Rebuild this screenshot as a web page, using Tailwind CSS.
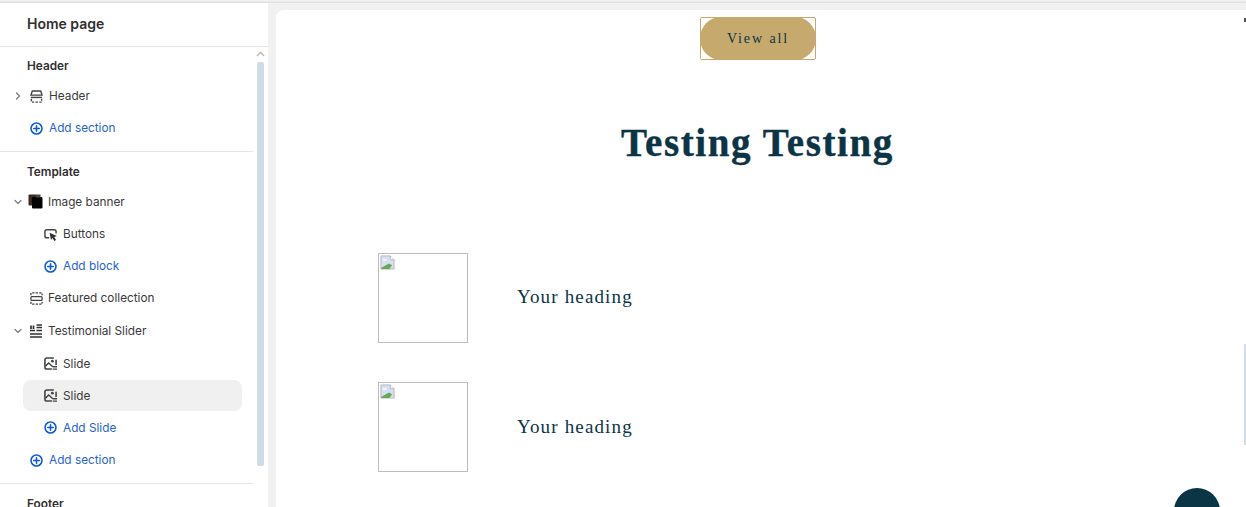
<!DOCTYPE html>
<html lang="en">
  <head>
    <meta charset="UTF-8" />
    <title>Home page</title>
    <script src="https://cdn.jsdelivr.net/npm/@tailwindcss/browser@4"></script>
  </head>
  <body class="h-[507px] w-[1246px] overflow-hidden bg-[#f1f1f1] font-['Inter',sans-serif] text-[#303030]">
    <svg class="hidden">
      <symbol id="plus" viewBox="0 0 14 14"><circle cx="7" cy="7" r="5.9" fill="none" stroke="#0b5bd8" stroke-width="1.7"/><path d="M7 4v6M4 7h6" stroke="#0b5bd8" stroke-width="1.7" stroke-linecap="round"/></symbol>
      <symbol id="slide" viewBox="0 0 14 14"><path d="M10 1H3A2 2 0 0 0 1 3v8a2 2 0 0 0 2 2h5M13 8V3.500" fill="none" stroke="#444" stroke-width="1.700" stroke-linecap="round"/><path d="M1.500 10l3.500-3.500 4.500 4" fill="none" stroke="#444" stroke-width="1.600"/><circle cx="9" cy="4.500" r="1.500" fill="#444"/><path d="M9.500 10.500h4.500M9.500 13h4.500" stroke="#444" stroke-width="1.500"/></symbol>
      <symbol id="down" viewBox="0 0 10 10"><path d="M2 3.500 5 6.500 8 3.500" fill="none" stroke="#777" stroke-width="1.200" stroke-linecap="round"/></symbol>
      <symbol id="broken" viewBox="0 0 16 16"><path d="M1 1h10l4 4v10H1z" fill="#d5e0f7" stroke="#b5b5b5"/><path d="M11 1v4h4" fill="#fff" stroke="#b5b5b5"/><path d="M1.500 15v-1.500l8-4.500 3.500 2-3 4z" fill="#6aa84f"/><path d="M3 4.500h4v1.500H3z" fill="#fff"/></symbol>
    </svg>

    <div class="h-[3px] bg-linear-to-b from-[#f6f6f6] to-[#dcdcdc]"></div>

    <div class="flex h-[504px] items-start">
      <aside class="relative h-[504px] w-[268px] shrink-0 overflow-hidden bg-white text-[11.8px] text-[#3a3a3a] [&_span]:mt-[2px]">
        <div class="flex h-[44px] items-center border-b border-[#e6e6e6] pb-[2px] pl-[27px] text-[14px] font-semibold text-[#303030]">Home page</div>

        <!-- scrollbar -->
        <svg class="absolute left-[256px] top-[47px] h-[8px] w-[9px]" viewBox="0 0 9 8"><path d="M1 6 4.500 2.500 8 6" fill="none" stroke="#bdbdbd" stroke-width="1.600"/></svg>
        <div class="absolute left-[257px] top-[59px] h-[404px] w-[7px] rounded-[2px] bg-[#cfdbe5]"></div>

        <div class="w-[253px]">
          <section class="h-[105px] border-b border-[#e6e6e6]">
            <h3 class="flex h-[33px] items-end pb-[4px] pl-[27px] text-[11.8px] font-semibold text-[#303030]">Header</h3>
            <div class="flex h-[32px] items-center">
              <svg class="ml-[13px] mr-[7px] h-[10px] w-[10px]" viewBox="0 0 10 10"><path d="M3.500 2 6.500 5 3.500 8" fill="none" stroke="#777" stroke-width="1.200" stroke-linecap="round"/></svg>
              <svg class="mr-[6px] h-[13px] w-[13px]" viewBox="0 0 14 14"><path d="M2.500 1h9l1.500 4.500H1z" fill="none" stroke="#444" stroke-width="1.500"/><path d="M1 8h12" stroke="#444" stroke-width="1.500"/><path d="M1.500 9.500v3.500h11V9.500" fill="none" stroke="#444" stroke-width="1.500" stroke-dasharray="2.500 1.500"/></svg>
              <span>Header</span>
            </div>
            <div class="flex h-[32px] items-center pl-[30px] text-[#2463d4]">
              <svg class="mr-[6px] h-[13px] w-[13px]"><use href="#plus"/></svg><span>Add section</span>
            </div>
          </section>

          <section class="h-[332px] border-b border-[#e6e6e6]">
            <h3 class="flex h-[33px] items-end pb-[3px] pl-[27px] text-[11.8px] font-semibold text-[#303030]">Template</h3>
            <div class="flex h-[33px] items-center">
              <svg class="ml-[13px] mr-[5px] h-[10px] w-[10px]"><use href="#down"/></svg>
              <svg class="mr-[5px] h-[15px] w-[15px]" viewBox="0 0 15 15"><rect x="0.500" y="0.500" width="8" height="11" rx="1" fill="#3a2a22"/><rect x="4" y="3" width="10.500" height="11.500" rx="1" fill="#050505"/><rect x="8" y="0.500" width="4.500" height="3" fill="#5a4030"/></svg>
              <span>Image banner</span>
            </div>
            <div class="flex h-[32px] items-center pl-[44px]">
              <svg class="mr-[6px] h-[13px] w-[13px]" viewBox="0 0 14 14"><path d="M5.500 10.500H3A2 2 0 0 1 1 8.500V4a2 2 0 0 1 2-2h8a2 2 0 0 1 2 2v2" fill="none" stroke="#444" stroke-width="1.600"/><path d="M6 5 14 8.500 11 9.800 13 13 11 14 9.200 10.800 7.500 13z" fill="#303030"/></svg>
              <span>Buttons</span>
            </div>
            <div class="flex h-[32px] items-center pl-[44px] text-[#2463d4]">
              <svg class="mr-[6px] h-[13px] w-[13px]"><use href="#plus"/></svg><span>Add block</span>
            </div>
            <div class="flex h-[32px] items-center pl-[30px]">
              <svg class="mr-[5px] h-[13px] w-[13px]" viewBox="0 0 14 14"><rect x="1" y="5" width="12" height="4" rx="1" fill="none" stroke="#444" stroke-width="1.400"/><path d="M1 3.500V1h12v2.500M1 10.500V13h12v-2.500" fill="none" stroke="#444" stroke-width="1.400" stroke-dasharray="2.500 1.300"/></svg>
              <span>Featured collection</span>
            </div>
            <div class="flex h-[33px] items-center">
              <svg class="ml-[13px] mr-[6px] h-[10px] w-[10px]"><use href="#down"/></svg>
              <svg class="mr-[5px] h-[14px] w-[14px]" viewBox="0 0 14 14"><path d="M1 13h12M1 10h12M7.500 6.500H13M7.500 3.500H13M7.500 1H13" stroke="#333" stroke-width="1.300"/><path d="M2 1.500v3.500M4.500 1.500v3.500M1 6.500h5" stroke="#333" stroke-width="1.700"/></svg>
              <span>Testimonial Slider</span>
            </div>
            <div class="flex h-[33px] items-center pl-[44px]">
              <svg class="mr-[6px] h-[13px] w-[13px]"><use href="#slide"/></svg><span>Slide</span>
            </div>
            <div class="ml-[23px] flex h-[31px] w-[219px] items-center rounded-lg bg-[#f0f0f0] pl-[21px]">
              <svg class="mr-[6px] h-[13px] w-[13px]"><use href="#slide"/></svg><span>Slide</span>
            </div>
            <div class="flex h-[33px] items-center pl-[44px] text-[#2463d4]">
              <svg class="mr-[6px] h-[13px] w-[13px]"><use href="#plus"/></svg><span>Add Slide</span>
            </div>
            <div class="flex h-[32px] items-center pl-[30px] text-[#2463d4]">
              <svg class="mr-[6px] h-[13px] w-[13px]"><use href="#plus"/></svg><span>Add section</span>
            </div>
          </section>

          <h3 class="pl-[27px] pt-[12px] text-[11.8px] font-semibold text-[#303030]">Footer</h3>
        </div>
      </aside>

      <main class="relative ml-[8px] mt-[7px] h-[497px] flex-1 overflow-hidden rounded-tl-lg bg-white font-['Liberation_Serif',serif] text-[#0b3445]">
        <!-- button centred on 758 -->
        <div class="ml-[424px] mt-[7px] flex h-[43px] w-[116px] items-center justify-center rounded-[2px] border border-[#c6a96c] bg-white">
          <a class="-m-px flex h-[43px] w-[116px] shrink-0 items-center justify-center rounded-[21px] bg-[#c6a96c] text-[14px] tracking-[1.900px]">View all</a>
        </div>

        <h1 class="mt-[59px] ml-[345px] w-[273px] whitespace-nowrap text-center text-[39px] leading-[48px] font-bold tracking-[1.600px] [-webkit-text-stroke:0.4px_#0b3445]">Testing Testing</h1>

        <div class="ml-[102px] mt-[86px] flex flex-col gap-[39px]">
          <div class="flex items-center gap-[49px]">
            <div class="h-[90px] w-[90px] border border-[#bdbdbd]"><svg class="m-px h-[15px] w-[15px]"><use href="#broken"/></svg></div>
            <p class="pb-[2px] text-[19px] tracking-[1.150px]">Your heading</p>
          </div>
          <div class="flex items-center gap-[49px]">
            <div class="h-[90px] w-[90px] border border-[#bdbdbd]"><svg class="m-px h-[15px] w-[15px]"><use href="#broken"/></svg></div>
            <p class="text-[19px] tracking-[1.150px]">Your heading</p>
          </div>
        </div>

        <!-- stray preview scrollbar and chat bubble -->
        <div class="absolute left-[968px] top-[334px] h-[101px] w-[2px] bg-[#cfdbe5]"></div>
        <div class="absolute left-[968px] top-[8px] h-[4px] w-[2px] bg-[#555]"></div>
        <div class="absolute left-[898px] top-[478px] h-[46px] w-[46px] rounded-full bg-[#0b3445]"></div>
      </main>
    </div>
  </body>
</html>
